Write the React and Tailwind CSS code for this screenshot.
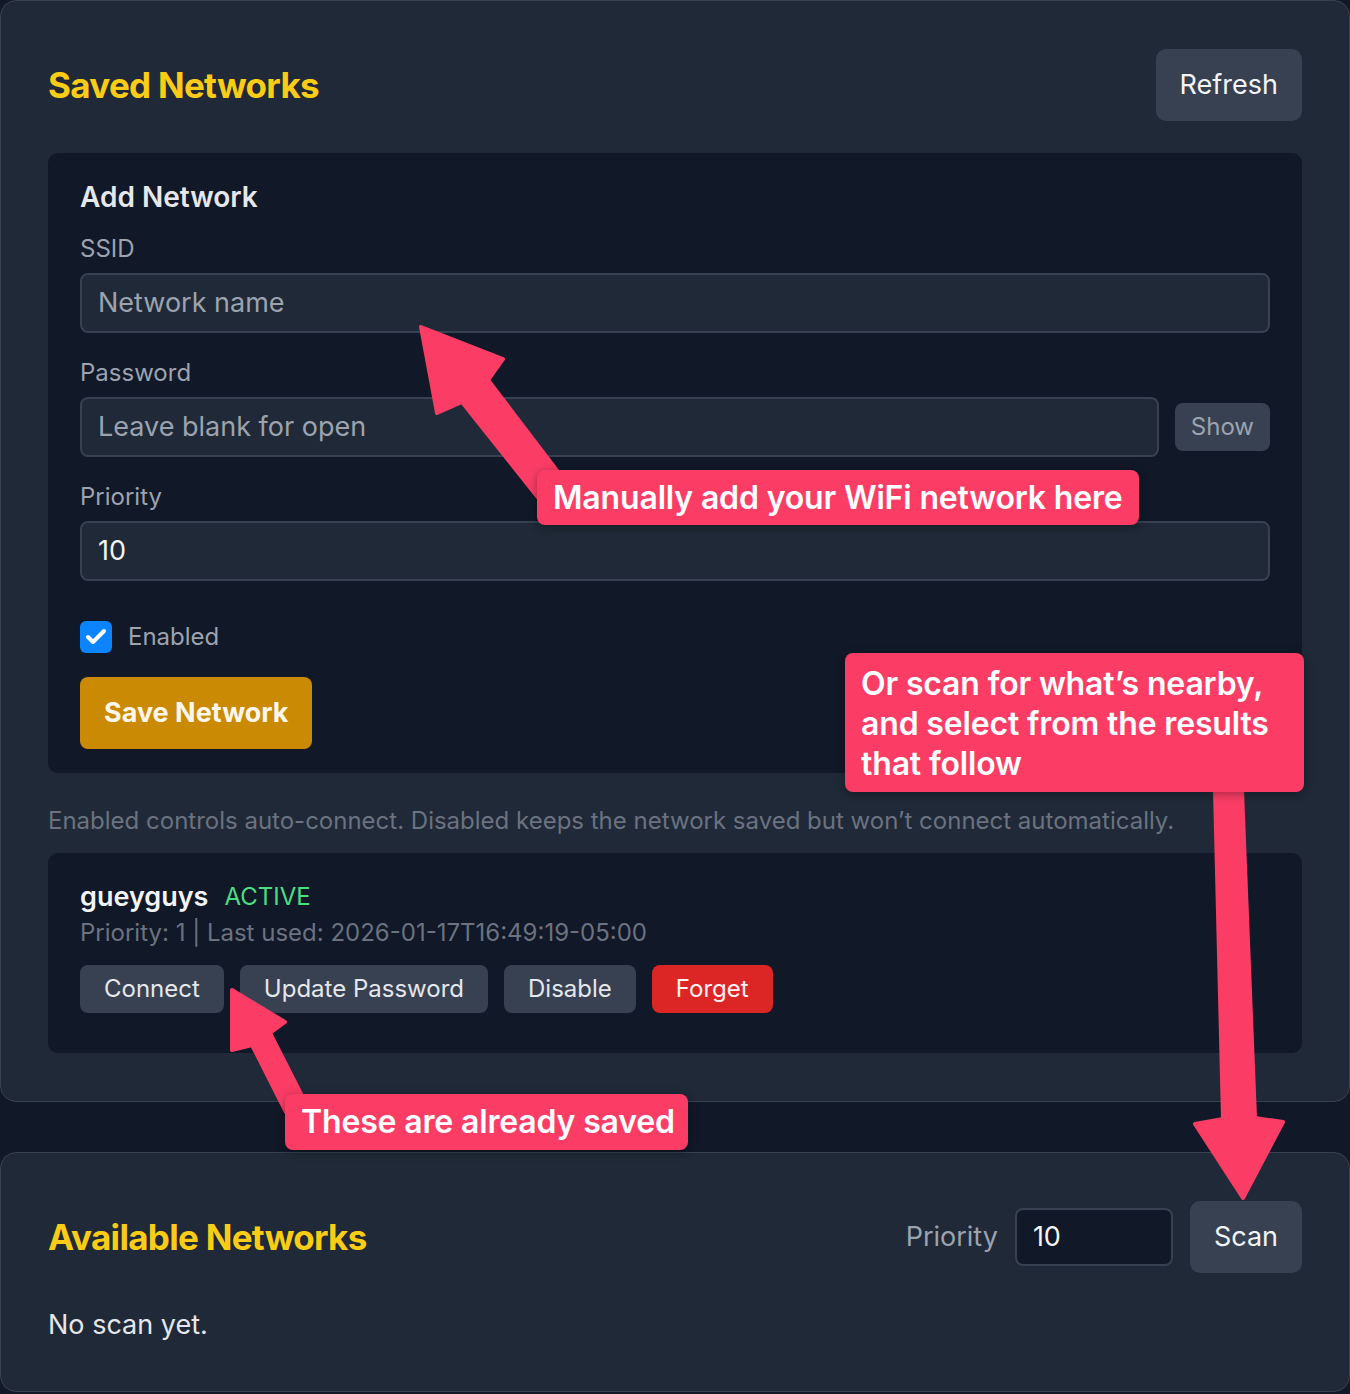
import { Check } from "lucide-react";

const PINK = "#fb3d66";

function Field({ label, placeholder, value, children }) {
  return (
    <div className="mt-6 first:mt-0">
      <div className="text-[24px] leading-[32px] text-[#9ca3af]">{label}</div>
      <div className="mt-2 flex items-center gap-4">
        <div className="flex h-[60px] flex-1 items-center rounded-lg border-2 border-[#374151] bg-[#1f2937] px-[16px] text-[27px]">
          {value ? (
            <span className="text-[#f3f4f6]">{value}</span>
          ) : (
            <span className="text-[#9ca3af]">{placeholder}</span>
          )}
        </div>
        {children}
      </div>
    </div>
  );
}

function SmallButton({ children, danger }) {
  return (
    <button
      className={`h-12 rounded-lg px-6 text-[24px] leading-[32px] ${
        danger ? "bg-[#dc2626] text-[#fef2f2]" : "bg-[#374151] text-[#e5e7eb]"
      }`}
    >
      {children}
    </button>
  );
}

function Callout({ className, children }) {
  return (
    <div
      className={`absolute whitespace-nowrap rounded-lg bg-[#fb3d66] px-[16px] text-[32px] font-semibold leading-[40px] tracking-[-0.005em] text-white shadow-[0_2px_10px_rgba(0,0,0,0.35)] ${className}`}
    >
      {children}
    </div>
  );
}

export default function App() {
  return (
    <div
      className="relative min-h-screen overflow-hidden bg-[#111827]"
      style={{ fontFamily: "Inter, 'Noto Sans', sans-serif" }}
    >
      {/* Saved networks */}
      <section className="rounded-2xl border border-[#374151] bg-[#1f2937] px-[47px] pb-12 pt-12">
        <div className="flex items-center justify-between">
          <h2 className="text-[35px] font-bold tracking-[-0.02em] text-[#facc15]">Saved Networks</h2>
          <button className="h-[72px] rounded-[10px] bg-[#374151] px-6 text-[27px] text-[#f3f4f6]">
            Refresh
          </button>
        </div>

        <div className="mt-8 rounded-[10px] bg-[#111827] px-8 pb-6 pt-6">
          <h3 className="text-[28px] font-semibold leading-[40px] text-[#e5e7eb]">Add Network</h3>
          <div className="mt-4">
            <Field label="SSID" placeholder="Network name" />
            <Field label="Password" placeholder="Leave blank for open">
              <button className="h-12 rounded-lg bg-[#374151] px-4 text-[24px] text-[#9ca3af]">Show</button>
            </Field>
            <Field label="Priority" value="10" />
          </div>
          <label className="mt-10 flex items-center gap-4">
            <span className="flex h-8 w-8 items-center justify-center rounded-md bg-[#0a84ff]">
              <Check size={24} strokeWidth={4} color="#fff" />
            </span>
            <span className="text-[24px] leading-[32px] text-[#9ca3af]">Enabled</span>
          </label>
          <button className="mt-6 h-[72px] rounded-lg bg-[#ca8a04] px-6 text-[27px] font-bold text-[#fdf6ec]">
            Save Network
          </button>
        </div>

        <p className="mt-8 text-[24px] leading-[32px] text-[#6b7280]">
          Enabled controls auto-connect. Disabled keeps the network saved but won’t connect automatically.
        </p>

        <div className="mt-4 rounded-[10px] bg-[#111827] px-8 pb-10 pt-6">
          <div className="flex items-center gap-4">
            <span className="text-[27px] font-semibold leading-[40px] text-[#f3f4f6]">gueyguys</span>
            <span className="text-[24px] text-[#4ade80]">ACTIVE</span>
          </div>
          <div className="text-[24px] leading-[32px] text-[#6b7280]">
            Priority: 1 | Last used: 2026-01-17T16:49:19-05:00
          </div>
          <div className="mt-4 flex gap-4">
            <SmallButton>Connect</SmallButton>
            <SmallButton>Update Password</SmallButton>
            <SmallButton>Disable</SmallButton>
            <SmallButton danger>Forget</SmallButton>
          </div>
        </div>
      </section>

      {/* Available networks */}
      <section className="mt-[50px] rounded-2xl border border-[#374151] bg-[#1f2937] px-[47px] pb-[46px] pt-12">
        <div className="flex items-center justify-between">
          <h2 className="text-[35px] font-bold tracking-[-0.02em] text-[#facc15]">Available Networks</h2>
          <div className="flex items-center gap-[17px]">
            <span className="text-[27px] text-[#9ca3af]">Priority</span>
            <div className="flex h-[58px] w-[158px] items-center rounded-lg border-2 border-[#374151] bg-[#111827] px-4 text-[27px] text-[#f3f4f6]">
              10
            </div>
            <button className="h-[72px] rounded-[10px] bg-[#374151] px-6 text-[27px] text-[#f3f4f6]">Scan</button>
          </div>
        </div>
        <p className="mt-8 text-[27px] leading-[40px] text-[#e5e7eb]">No scan yet.</p>
      </section>

      {/* Annotations */}
      <svg
        className="pointer-events-none absolute left-0 top-0"
        width="1350"
        height="1394"
        viewBox="0 0 1350 1394"
      >
        <g fill={PINK} stroke={PINK} strokeWidth="4" strokeLinejoin="round">
          <polygon points="421,327 503,359 488,380 558,472 540,500 462,402 437,413" />
          <polygon points="1215,790 1242,790 1255,1118 1283,1122 1243,1198 1195,1124 1223,1119" />
          <polygon points="232,990 285,1022 270,1033 302,1096 286,1112 252,1045 232,1050" />
        </g>
      </svg>
      <Callout className="left-[537px] top-[470px] flex h-[55px] w-[602px] items-center">
        Manually add your WiFi network here
      </Callout>
      <Callout className="left-[845px] top-[653px] h-[139px] w-[459px] pt-[11px]">
        Or scan for what’s nearby,
        <br />
        and select from the results
        <br />
        that follow
      </Callout>
      <Callout className="left-[285px] top-[1094px] flex h-[56px] w-[403px] items-center">
        These are already saved
      </Callout>
    </div>
  );
}
